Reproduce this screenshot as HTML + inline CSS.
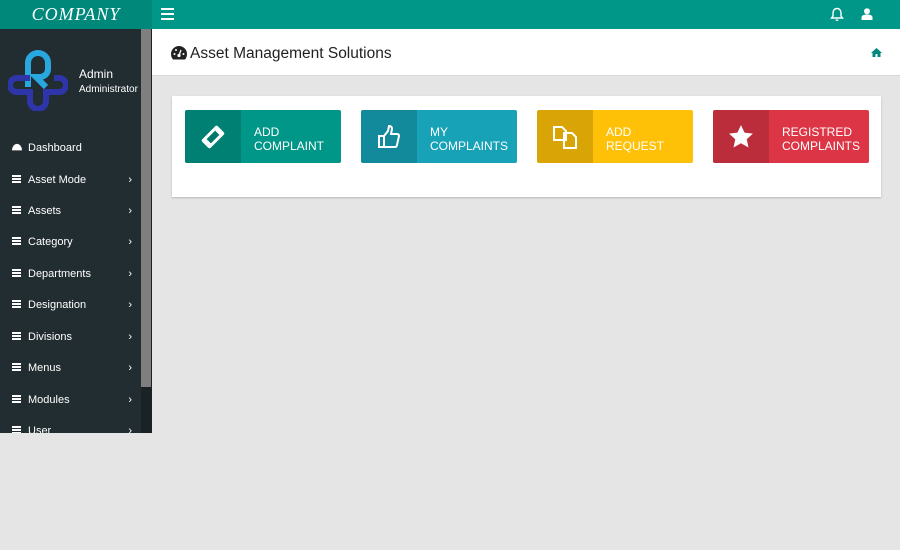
<!DOCTYPE html>
<html><head><style>
*{margin:0;padding:0;box-sizing:border-box}
body{width:900px;height:550px;background:#e5e5e5;font-family:"Liberation Sans",sans-serif;position:relative;overflow:hidden}
.top{position:absolute;left:0;top:0;width:900px;height:29px;background:#009688}
.logo{position:absolute;left:0;top:0;width:152px;height:29px;background:#00897b;color:#fff;font-family:"Liberation Serif",serif;font-style:italic;font-size:18px;text-align:center;line-height:29px;letter-spacing:1px}
.side{position:absolute;left:0;top:29px;width:152px;height:404px;background:#222d32;overflow:hidden}
.sb{position:absolute;left:141px;top:0;width:11px;height:404px;background:#1a2226}
.thumb{position:absolute;left:141px;top:0;width:10px;height:358px;background:#7f7f7f}
.user{position:absolute;left:79px;top:38px;color:#fff;font-size:12px}
.user small{display:block;font-size:10px;margin-top:3px}
.item{position:absolute;left:12px;color:#fff;font-size:11px;width:120px}
.item .h{display:inline-block;width:9px;height:8px;margin-right:7px;vertical-align:0px;background:linear-gradient(#fff 0 2px,transparent 2px 3px,#fff 3px 5px,transparent 5px 6px,#fff 6px 8px)}
.item .c{position:absolute;right:0;top:0;font-size:11px}
.ch{position:absolute;left:152px;top:29px;width:748px;height:47px;background:#fff;border-bottom:1px solid #d8d8d8}
.ch h1{position:absolute;left:38px;top:16px;font-size:15.5px;font-weight:normal;color:#222}
.box{position:absolute;left:172px;top:96px;width:709px;height:101px;background:#fff;box-shadow:0 1px 2px rgba(0,0,0,.2)}
.tile{position:absolute;top:14px;width:156px;height:53px;border-radius:2px;color:#fff;font-size:12px;overflow:hidden}
.tile .ic{position:absolute;left:0;top:0;width:56px;height:53px;background:rgba(0,0,0,.15);display:flex;align-items:center;justify-content:center}
.tile .t{position:absolute;left:69px;top:15px;line-height:14px}
</style></head><body>
<div class="top"></div>
<div class="logo">COMPANY</div>
<div style="position:absolute;left:161px;top:8px;width:13px;height:12px;border-top:2px solid #fff;border-bottom:2px solid #fff"><div style="margin-top:3px;height:2px;background:#fff"></div></div>
<svg style="position:absolute;left:830px;top:7px" width="14" height="15" viewBox="0 0 14 15"><path d="M7 1.5c-2.5 0-4 2-4 4.5v3L1.5 11h11L11 9V6c0-2.5-1.5-4.5-4-4.5z" fill="none" stroke="#fff" stroke-width="1.4"/><path d="M5.5 12.5a1.5 1.5 0 0 0 3 0" fill="#fff"/></svg>
<svg style="position:absolute;left:861px;top:8px" width="12" height="12" viewBox="0 0 12 12"><circle cx="6" cy="3.3" r="3" fill="#fff"/><path d="M0.5 12v-2.5c0-2 2-3 5.5-3s5.5 1 5.5 3V12z" fill="#fff"/></svg>
<div class="side">
<svg style="position:absolute;left:8px;top:20px" width="60" height="62" viewBox="0 0 60 62"><path d="M20 38V14a10 10 0 0 1 20 0v6a8 8 0 0 1-8 8h-4l10 10" fill="none" stroke="#29a8e0" stroke-width="6"/><path d="M22 29H9a7 7 0 0 0 0 14h13v9a8 8 0 0 0 16 0v-9h13a7 7 0 0 0 0-14H46" fill="none" stroke="#2d35a8" stroke-width="6"/></svg>
<div class="user">Admin<small>Administrator</small></div>
<div class="item" style="top:113px"><svg width="10" height="9" viewBox="0 0 10 9" style="margin-right:6px"><path d="M0 8a5 5 0 0 1 10 0z" fill="#fff" transform="translate(0,-2) scale(1,1.3)"/></svg>Dashboard</div>
<div class="item" style="top:145px"><span class="h"></span>Asset Mode<span class="c">›</span></div>
<div class="item" style="top:176px"><span class="h"></span>Assets<span class="c">›</span></div>
<div class="item" style="top:207px"><span class="h"></span>Category<span class="c">›</span></div>
<div class="item" style="top:239px"><span class="h"></span>Departments<span class="c">›</span></div>
<div class="item" style="top:270px"><span class="h"></span>Designation<span class="c">›</span></div>
<div class="item" style="top:302px"><span class="h"></span>Divisions<span class="c">›</span></div>
<div class="item" style="top:333px"><span class="h"></span>Menus<span class="c">›</span></div>
<div class="item" style="top:365px"><span class="h"></span>Modules<span class="c">›</span></div>
<div class="item" style="top:396px"><span class="h"></span>User<span class="c">›</span></div>
<div class="sb"></div><div class="thumb"></div>
</div>
<div class="ch"><svg style="position:absolute;left:19px;top:17px" width="16" height="14" viewBox="0 0 16 14"><path d="M8 0a8 8 0 0 0-8 8c0 2 .7 4 2 5.5h12A8 8 0 0 0 16 8a8 8 0 0 0-8-8z" fill="#222"/><circle cx="8" cy="9.5" r="1.6" fill="#fff"/><path d="M8 9.5L10 4" stroke="#fff" stroke-width="1.3"/><circle cx="3.5" cy="8" r="1" fill="#fff"/><circle cx="12.5" cy="8" r="1" fill="#fff"/><circle cx="5" cy="4" r="1" fill="#fff"/></svg><h1>Asset Management Solutions</h1>
<svg style="position:absolute;left:719px;top:19px" width="11" height="9" viewBox="0 0 11 9"><path d="M5.5 0L0 5h1.5v4h3V6h2v3h3V5H11z" fill="#00897b"/></svg></div>
<div class="box">
<div class="tile" style="left:13px;background:#009688"><div class="ic"><svg width="26" height="26" viewBox="0 0 26 26"><g transform="rotate(-45 13 13)"><rect x="2" y="7" width="22" height="12" rx="2" fill="#fff"/><rect x="7" y="10" width="12" height="6" fill="#00796b"/></g></svg></div><div class="t">ADD<br>COMPLAINT</div></div>
<div class="tile" style="left:189px;background:#17a2b8"><div class="ic"><svg width="24" height="24" viewBox="0 0 24 24"><path d="M2 11h5v11H2zM7 11l4-5 1-5c2 0 3 1 3 3l-1 5h6c1.5 0 2 1 2 2l-2 9c0 1-1 2-2 2H7" fill="none" stroke="#fff" stroke-width="2"/></svg></div><div class="t">MY<br>COMPLAINTS</div></div>
<div class="tile" style="left:365px;background:#ffc107"><div class="ic"><svg width="26" height="26" viewBox="0 0 26 26"><path d="M2 3h8l4 4v9H2zM12 9h8l4 4v11H12z" fill="none" stroke="#fff" stroke-width="2"/></svg></div><div class="t">ADD<br>REQUEST</div></div>
<div class="tile" style="left:541px;background:#dc3545"><div class="ic"><svg width="26" height="26" viewBox="0 0 24 24"><path d="M12 1l3.3 7 7.7.9-5.7 5.2 1.6 7.6L12 17.8 5.1 21.7l1.6-7.6L1 8.9 8.7 8z" fill="#fff"/></svg></div><div class="t">REGISTRED<br>COMPLAINTS</div></div>
</div>
</body></html>
